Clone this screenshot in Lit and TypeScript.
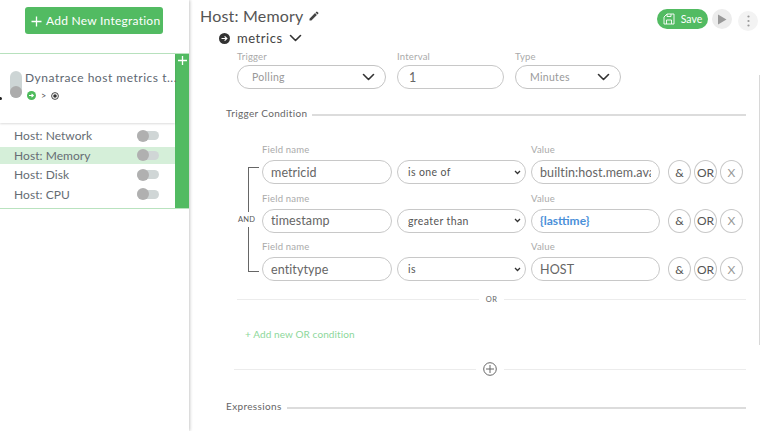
// app.ts
// Integration editor screen: sidebar with integrations, trigger condition form

import { LitElement, html, css, svg } from "lit";
import { customElement, state } from "lit/decorators.js";

const chevron = svg`<path d="M1.5 1.5 L6.5 6.5 L11.5 1.5" fill="none" stroke="#333" stroke-width="1.6" stroke-linecap="round" stroke-linejoin="round"/>`;

@customElement("app-root")
export class AppRoot extends LitElement {
  @state() selected = "Host: Memory";

  private streams = ["Host: Network", "Host: Memory", "Host: Disk", "Host: CPU"];

  private conditions = [
    { field: "metricid", op: "is one of", value: "builtin:host.mem.available", accent: false },
    { field: "timestamp", op: "greater than", value: "{lasttime}", accent: true },
    { field: "entitytype", op: "is", value: "HOST", accent: false },
  ];

  static styles = css`
    :host {
      display: block;
      width: 760px;
      height: 431px;
      overflow: hidden;
      background: #fff;
      font-family: Lato, "Noto Sans", sans-serif;
      color: #555;
    }

    .page {
      display: flex;
      height: 431px;
      position: relative;
    }

    .sidebar {
      width: 189px;
      flex: none;
      box-shadow: 1px 0 3px rgba(0, 0, 0, 0.22);
      z-index: 1;
    }

    .add-btn {
      display: flex;
      align-items: center;
      gap: 3px;
      width: 138px;
      height: 27px;
      box-sizing: border-box;
      margin: 7px 0 19px 25px;
      padding-left: 5px;
      background: #52bb62;
      border-radius: 3px;
      color: #fff;
      font-size: 12px;
      letter-spacing: 0.25px;
      white-space: nowrap;
    }

    .add-btn svg {
      flex: none;
      margin-top: 2px;
    }

    .group {
      display: flex;
      height: 156px;
      box-sizing: border-box;
      border-top: 1px solid #b9e3bf;
      border-bottom: 1px solid #b9e3bf;
    }

    .group-body {
      flex: 1;
      min-width: 0;
    }

    .group-add {
      width: 14px;
      background: #52bb62;
      display: flex;
      justify-content: center;
      padding-top: 1px;
      box-sizing: border-box;
    }

    .integration {
      position: relative;
      height: 69px;
      display: flex;
      gap: 3px;
      padding: 17px 0 0 10px;
      box-sizing: border-box;
      box-shadow: 0 1px 2px rgba(0, 0, 0, 0.14);
    }

    .dot {
      position: absolute;
      left: -1px;
      top: 43px;
      width: 3px;
      height: 3px;
      border-radius: 50%;
      background: #222;
    }

    .slider {
      width: 12px;
      height: 27px;
      border-radius: 6px;
      background: #cdd5d5;
      position: relative;
      flex: none;
    }

    .slider::after {
      content: "";
      position: absolute;
      left: 0;
      bottom: 0;
      width: 12px;
      height: 12px;
      border-radius: 50%;
      background: #acacac;
    }

    .integration-name {
      font-size: 12px;
      letter-spacing: 0.52px;
      line-height: 15px;
      margin-top: -1px;
      white-space: nowrap;
      color: #5d6670;
    }

    .flow {
      display: flex;
      align-items: center;
      gap: 5px;
      margin-top: 5px;
      font-size: 9px;
      color: #555;
      padding-left: 2px;
    }

    .streams {
      padding-top: 4px;
    }

    .stream {
      display: flex;
      align-items: center;
      justify-content: space-between;
      height: 17px;
      margin-bottom: 2.5px;
      padding: 0 16px 0 14px;
      font-size: 12px;
      letter-spacing: 0.05px;
      color: #666d74;
    }

    .stream.active {
      background: #d5efd9;
    }

    .toggle {
      position: relative;
      width: 22px;
      height: 9px;
      border-radius: 5px;
      background: #d0d6d6;
    }

    .toggle::after {
      content: "";
      position: absolute;
      left: 0;
      top: -1.5px;
      width: 12px;
      height: 12px;
      border-radius: 50%;
      background: #b0b0b0;
    }

    .main {
      flex: 1;
      min-width: 0;
      padding: 0 14px 0 11px;
      position: relative;
    }

    .top {
      display: flex;
      align-items: center;
      justify-content: space-between;
      height: 32px;
    }

    .title {
      display: flex;
      align-items: center;
      gap: 4px;
      margin-top: -1px;
      font-size: 16px;
      letter-spacing: 0.2px;
      color: #555;
    }

    .actions {
      display: flex;
      align-items: center;
      gap: 4px;
      margin: 6px -12px 0 0;
    }

    .save {
      display: flex;
      align-items: center;
      gap: 6px;
      width: 51px;
      height: 20px;
      justify-content: center;
      border-radius: 10px;
      background: #52bb62;
      color: #fff;
      font-size: 10.5px;
    }

    .round {
      width: 20px;
      height: 20px;
      border-radius: 50%;
      background: #ececec;
      display: flex;
      align-items: center;
      justify-content: center;
    }

    .round.more {
      background: #f3f3f3;
      margin: 4px 0 0 2px;
    }

    .stream-name {
      display: flex;
      align-items: center;
      gap: 7px;
      height: 14px;
      padding-left: 19px;
      margin-top: -1px;
      font-size: 13px;
      letter-spacing: 0.55px;
      color: #444;
    }

    .stream-name .caret {
      margin-left: -1px;
    }

    .trigger-row {
      display: flex;
      gap: 11px;
      padding-left: 37px;
      margin-top: 5px;
    }

    .label {
      display: block;
      font-size: 9.5px;
      letter-spacing: 0.2px;
      color: #aaa;
      line-height: 13px;
      margin-bottom: 2px;
    }

    .picker {
      display: flex;
      align-items: center;
      justify-content: space-between;
      box-sizing: border-box;
      height: 24px;
      border: 1px solid #c4c4c4;
      border-radius: 12px;
      padding: 0 10px 0 14px;
      font-size: 10.5px;
      color: #999;
      letter-spacing: 0.3px;
    }

    .section {
      display: flex;
      align-items: center;
      gap: 5px;
      padding-left: 26px;
      font-size: 10px;
      letter-spacing: 0.35px;
      color: #666;
      white-space: nowrap;
    }

    .section::after {
      content: "";
      flex: 1;
      height: 2px;
      margin-top: 3px;
      background: #dcdcdc;
    }

    .section.cond {
      margin-top: 18px;
    }

    .rows {
      position: relative;
      margin: 24px 0 0 62px;
      display: flex;
      flex-direction: column;
      gap: 7.5px;
    }

    .rows .label {
      margin-bottom: 4px;
    }

    .bracket {
      position: absolute;
      left: -14px;
      top: 24px;
      bottom: 9px;
      width: 10px;
      border: solid #666;
      border-width: 1px 0 1px 1px;
    }

    .and {
      position: absolute;
      left: -24px;
      top: 69px;
      padding: 3px 0;
      font-size: 7.5px;
      background: #fff;
      color: #555;
      letter-spacing: 0.2px;
    }

    .row {
      display: grid;
      grid-template-columns: 130px 129px 129px auto;
      column-gap: 5px;
      align-items: end;
    }

    input,
    select {
      display: block;
      box-sizing: border-box;
      width: 100%;
      height: 24px;
      border: 1px solid #c8c8c8;
      border-radius: 12px;
      background: #fff;
      font-family: inherit;
      color: #666;
      outline: none;
    }

    input {
      padding: 0 8px;
      font-size: 12.5px;
      letter-spacing: 0.1px;
    }

    input.interval {
      padding: 0 11px;
    }

    input.accent {
      color: #4a90d9;
      font-size: 12px;
      font-weight: 700;
      letter-spacing: 0;
    }

    select {
      appearance: none;
      padding: 0 14px 0 10px;
      font-size: 10.5px;
      letter-spacing: 0.4px;
      color: #555;
      background: #fff
        url("data:image/svg+xml,%3Csvg xmlns='http://www.w3.org/2000/svg' width='7' height='5'%3E%3Cpath d='M1 1l2.5 2.5L6 1' fill='none' stroke='%23333' stroke-width='1.3'/%3E%3C/svg%3E")
        no-repeat right 4px center;
    }

    .btns {
      display: flex;
      gap: 3px;
      margin-left: 3px;
    }

    .btns span {
      width: 23px;
      height: 24px;
      box-sizing: border-box;
      border: 1px solid #c8c8c8;
      border-radius: 50%;
      display: flex;
      align-items: center;
      justify-content: center;
      font-size: 12px;
      color: #555;
    }

    .btns span.x {
      color: #999;
    }

    .divider {
      display: flex;
      align-items: center;
      height: 12px;
      color: #666;
      font-size: 7.5px;
      letter-spacing: 0.4px;
    }

    .divider::before,
    .divider::after {
      content: "";
      height: 1px;
      background: #ececec;
    }

    .divider::before {
      width: 242px;
    }

    .divider::after {
      flex: 1;
    }

    .divider .mid {
      width: 25px;
      display: flex;
      justify-content: center;
    }

    .or-div {
      margin: 12px 0 0 37px;
    }

    .add-or {
      margin: 23px 0 0 45px;
      height: 13px;
      line-height: 13px;
      font-size: 10px;
      letter-spacing: 0.1px;
      color: #8dd79a;
    }

    .plus-div {
      margin: 22px 0 0 34px;
    }

    .plus-div .mid {
      width: 28px;
    }

    .expr {
      margin-top: 25px;
    }

    .scroll {
      position: absolute;
      right: 0;
      top: 75px;
      width: 1px;
      height: 270px;
      background: #d8d8d8;
    }
  `;

  protected render() {
    return html`
      <div class="page">
        <aside class="sidebar">
          <div class="add-btn">
            <svg width="13" height="13" viewBox="0 0 13 13"><path d="M6.5 1.5v10M1.5 6.5h10" stroke="#fff" stroke-width="1.3"/></svg>
            Add New Integration
          </div>
          <div class="group">
            <div class="group-body">
              <div class="integration">
                <span class="dot"></span>
                <span class="slider"></span>
                <div>
                  <div class="integration-name">Dynatrace host metrics t...</div>
                  <div class="flow">
                    <svg width="9" height="9" viewBox="0 0 9 9"><circle cx="4.5" cy="4.5" r="4.5" fill="#4dbb5c"/><path d="M2 4.5h4M4.5 2.8l1.8 1.7-1.8 1.7" stroke="#fff" stroke-width="1.1" fill="none"/></svg>
                    <span>&gt;</span>
                    <svg width="8" height="8" viewBox="0 0 8 8"><circle cx="4" cy="4" r="3.4" fill="none" stroke="#333" stroke-width="0.9"/><circle cx="4" cy="4" r="1.8" fill="#333"/></svg>
                  </div>
                </div>
              </div>
              <div class="streams">
                ${this.streams.map(
                  (s) => html`
                    <div class="stream ${s === this.selected ? "active" : ""}">
                      <span>${s}</span><span class="toggle"></span>
                    </div>
                  `
                )}
              </div>
            </div>
            <div class="group-add">
              <svg width="11" height="11" viewBox="0 0 11 11"><path d="M5.5 1v9M1 5.5h9" stroke="#fff" stroke-width="1.3"/></svg>
            </div>
          </div>
        </aside>

        <main class="main">
          <div class="top">
            <div class="title">
              Host: Memory
              <svg width="12" height="12" viewBox="0 0 24 24"><path fill="#444" d="M3 17.25V21h3.75L17.81 9.94l-3.75-3.75L3 17.25zM20.71 7.04a1 1 0 0 0 0-1.41l-2.34-2.34a1 1 0 0 0-1.41 0l-1.83 1.83 3.75 3.75 1.83-1.83z"/></svg>
            </div>
            <div class="actions">
              <div class="save">
                <svg width="12" height="12" viewBox="0 0 12 12"><path d="M1 11V4l3-3h7v10zM3.5 11V7h5v4M4 1v2.5h4V1" fill="none" stroke="#fff" stroke-width="0.9"/></svg>
                Save
              </div>
              <div class="round">
                <svg width="10" height="11" viewBox="0 0 10 11"><path d="M1 0.5 9.5 5.5 1 10.5z" fill="#999"/></svg>
              </div>
              <div class="round more">
                <svg width="3" height="12" viewBox="0 0 3 12"><circle cx="1.5" cy="1.5" r="1.1" fill="#999"/><circle cx="1.5" cy="6" r="1.1" fill="#999"/><circle cx="1.5" cy="10.5" r="1.1" fill="#999"/></svg>
              </div>
            </div>
          </div>

          <div class="stream-name">
            <svg width="11" height="11" viewBox="0 0 11 11"><circle cx="5.5" cy="5.5" r="5.5" fill="#333"/><path d="M2.5 5.5h5M5.6 3.4 7.8 5.5 5.6 7.6" stroke="#fff" stroke-width="1.2" fill="none"/></svg>
            <span>metrics</span>
            <svg class="caret" width="13" height="8" viewBox="0 0 13 8">${chevron}</svg>
          </div>

          <div class="trigger-row">
            <div style="width:149px">
              <span class="label">Trigger</span>
              <div class="picker">Polling <svg width="13" height="8" viewBox="0 0 13 8">${chevron}</svg></div>
            </div>
            <div style="width:107px">
              <span class="label">Interval</span>
              <input class="interval" value="1" />
            </div>
            <div style="width:106px">
              <span class="label">Type</span>
              <div class="picker">Minutes <svg width="13" height="8" viewBox="0 0 13 8">${chevron}</svg></div>
            </div>
          </div>

          <div class="section cond">Trigger Condition</div>

          <div class="rows">
            <span class="bracket"></span>
            <span class="and">AND</span>
            ${this.conditions.map(
              (c) => html`
                <div class="row">
                  <div>
                    <span class="label">Field name</span>
                    <input value=${c.field} />
                  </div>
                  <div>
                    <select><option>${c.op}</option></select>
                  </div>
                  <div>
                    <span class="label">Value</span>
                    <input class=${c.accent ? "accent" : ""} value=${c.value} />
                  </div>
                  <div class="btns">
                    <span>&amp;</span><span>OR</span><span class="x">X</span>
                  </div>
                </div>
              `
            )}
          </div>

          <div class="divider or-div"><span class="mid">OR</span></div>
          <div class="add-or">+ Add new OR condition</div>
          <div class="divider plus-div">
            <span class="mid">
              <svg width="14" height="14" viewBox="0 0 14 14"><circle cx="7" cy="7" r="6.3" fill="none" stroke="#666" stroke-width="1"/><path d="M7 3v8M3 7h8" stroke="#666" stroke-width="1"/></svg>
            </span>
          </div>
          <div class="section expr">Expressions</div>
          <span class="scroll"></span>
        </main>
      </div>
    `;
  }
}
